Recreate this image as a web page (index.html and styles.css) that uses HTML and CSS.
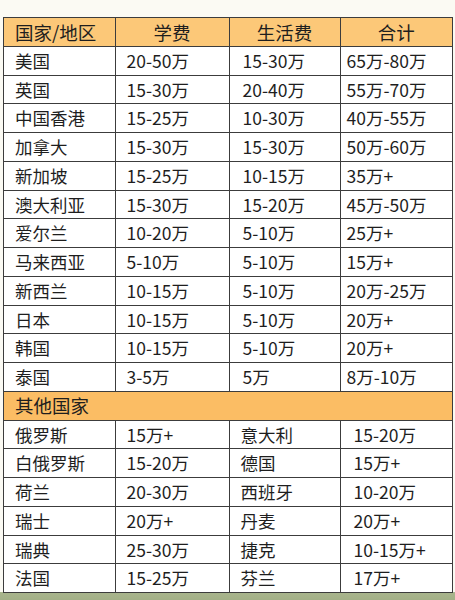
FILE: index.html
```html
<!DOCTYPE html>
<html lang="zh-CN">
<head>
<meta charset="utf-8">
<link rel="stylesheet" href="styles.css">
</head>
<body>
<div class="page">
<table class="fees">
<colgroup><col class="c1"><col class="c2"><col class="c3"><col class="c4"></colgroup>
<thead>
<tr class="head"><th class="first">国家/地区</th><th>学费</th><th>生活费</th><th>合计</th></tr>
</thead>
<tbody class="main">
<tr><td>美国</td><td>20-50万</td><td>15-30万</td><td>65万-80万</td></tr>
<tr><td>英国</td><td>15-30万</td><td>20-40万</td><td>55万-70万</td></tr>
<tr><td>中国香港</td><td>15-25万</td><td>10-30万</td><td>40万-55万</td></tr>
<tr><td>加拿大</td><td>15-30万</td><td>15-30万</td><td>50万-60万</td></tr>
<tr><td>新加坡</td><td>15-25万</td><td>10-15万</td><td>35万+</td></tr>
<tr><td>澳大利亚</td><td>15-30万</td><td>15-20万</td><td>45万-50万</td></tr>
<tr><td>爱尔兰</td><td>10-20万</td><td>5-10万</td><td>25万+</td></tr>
<tr><td>马来西亚</td><td>5-10万</td><td>5-10万</td><td>15万+</td></tr>
<tr><td>新西兰</td><td>10-15万</td><td>5-10万</td><td>20万-25万</td></tr>
<tr><td>日本</td><td>10-15万</td><td>5-10万</td><td>20万+</td></tr>
<tr><td>韩国</td><td>10-15万</td><td>5-10万</td><td>20万+</td></tr>
<tr><td>泰国</td><td>3-5万</td><td>5万</td><td>8万-10万</td></tr>
</tbody>
<tbody class="other">
<tr class="section"><td colspan="4">其他国家</td></tr>
<tr><td>俄罗斯</td><td>15万+</td><td>意大利</td><td>15-20万</td></tr>
<tr><td>白俄罗斯</td><td>15-20万</td><td>德国</td><td>15万+</td></tr>
<tr><td>荷兰</td><td>20-30万</td><td>西班牙</td><td>10-20万</td></tr>
<tr><td>瑞士</td><td>20万+</td><td>丹麦</td><td>20万+</td></tr>
<tr><td>瑞典</td><td>25-30万</td><td>捷克</td><td>10-15万+</td></tr>
<tr><td>法国</td><td>15-25万</td><td>芬兰</td><td>17万+</td></tr>
</tbody>
</table>
</div>
</body>
</html>
```
FILE: styles.css
```css
html, body {
  margin: 0;
  padding: 0;
}
body {
  background: #fbfaf3;
  font-family: "Noto Sans CJK SC", "Noto Sans", sans-serif;
  color: #1e1e1e;
}
.page {
  height: 600px;
  box-sizing: border-box;
  padding: 17px 0 0 3px;
  background: linear-gradient(to bottom, #fbfaf3 0, #fbfaf3 592px, #a9b58d 592px, #a3b087 600px);
  overflow: hidden;
}
.fees {
  border-collapse: collapse;
  width: 449px;
  table-layout: fixed;
  font-size: 17.5px;
  line-height: 1;
  background: #ffffff;
}
.c1 { width: 111.5px; }
.c2 { width: 114px; }
.c3 { width: 111px; }
.c4 { width: 112.5px; }
.fees tr {
  height: 28.75px;
}
.fees th, .fees td {
  border: 1.3px solid #3c3c3c;
  padding: 0 0 0 11px;
  text-align: left;
  vertical-align: middle;
  font-weight: 400;
  white-space: nowrap;
}
.head th {
  background: #fcc878;
  text-align: center;
  padding: 0;
  font-size: 18.5px;
}
.head th.first {
  text-align: left;
  padding-left: 11px;
}
.main td:nth-child(3) {
  padding-left: 13px;
}
.main td:nth-child(4) {
  padding-left: 6px;
}
.other td:nth-child(4) {
  padding-left: 13px;
}
.section td {
  background: #fbbd64;
  font-size: 18.5px;
  padding-left: 11px;
}
```
